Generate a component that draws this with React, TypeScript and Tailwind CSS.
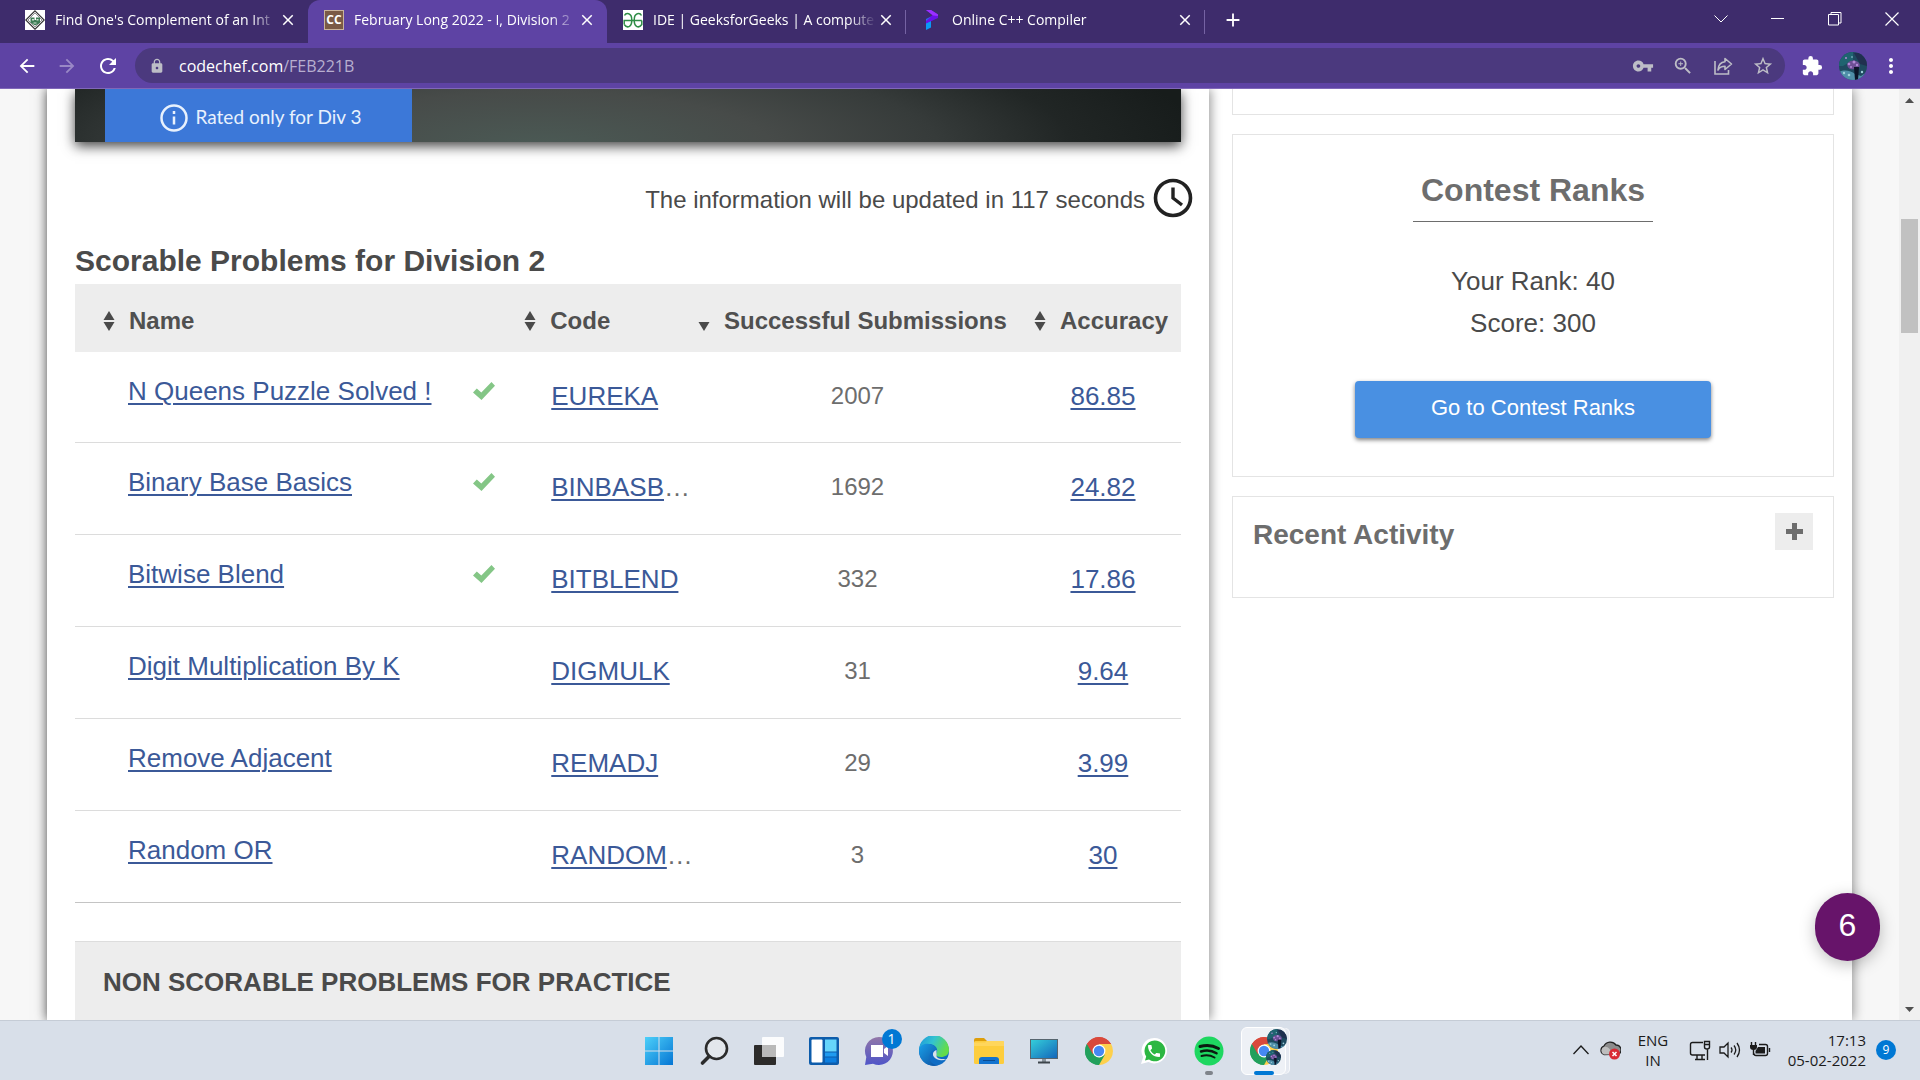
import React from "react";
import {
  MdArrowBack,
  MdArrowForward,
  MdRefresh,
  MdLock,
  MdVpnKey,
  MdZoomIn,
  MdStarBorder,
  MdExtension,
  MdMoreVert,
  MdClose,
  MdAdd,
  MdPhone,
} from "react-icons/md";

const arial = "font-['Liberation_Sans',Arial,sans-serif]";
const segoe = "font-['Open_Sans','Noto_Sans',sans-serif]";

/* ---------- Browser chrome ---------- */

const LeetFavicon = () => (
  <svg viewBox="0 0 20 20" className="size-5 shrink-0">
    <rect width="20" height="20" fill="#fff" />
    <path d="M10 .8 19.2 10 10 19.2.8 10Z" fill="#fff" stroke="#333" strokeWidth="1.2" />
    <path d="M10 3 17 10 10 17 3 10Z" fill="none" stroke="#777" strokeWidth=".8" />
    <path d="M5.500 7.500h4v2.500h1.500V7.500h4v5.500l-5 2.500-4.500-3Z" fill="#3e7d55" />
    <path d="M7 9h2v1.500H7zM11.500 9h2v1.500h-2zM8.500 12.500h3v1h-3z" fill="#cfe3d5" />
  </svg>
);

const ChefFavicon = () => (
  <span className="flex size-5 shrink-0 items-center justify-center border border-[#c9b39c] bg-[#7a5a46] font-['Open_Sans',sans-serif] text-[12px] leading-none font-bold text-white">
    CC
  </span>
);

const GeeksFavicon = () => (
  <svg viewBox="0 0 20 20" className="size-5 shrink-0">
    <rect width="20" height="20" fill="#fff" />
    <g fill="none" stroke="#2f8d46" strokeWidth="1.5">
      <path d="M1.500 5.500C3 2.500 8.800 2.500 8.800 10S4 18.500 1.200 14.500" />
      <path d="M18.500 5.500C17 2.500 11.200 2.500 11.200 10S16 18.500 18.800 14.500V10.500" />
      <path d="M1.200 14.500V10.500H18.800" />
    </g>
  </svg>
);

const ProgramizFavicon = () => (
  <svg viewBox="0 0 20 20" className="size-5 shrink-0">
    <path d="M4 13 9 10.500V17.500L4 20Z" fill="#0a9bf5" />
    <path d="M4 9 9 6.500V9L4 12Z" fill="#2a6cf0" />
    <path d="M4 0h5l7 4.500V8L4 13.500V11L10.500 5Z" fill="#6a11e8" />
    <path d="M4 0h5l7 4.500V6l-5-.5Z" fill="#9b30ff" />
  </svg>
);

type TabProps = { icon: React.ReactNode; title: string; active?: boolean; divider?: boolean };

const Tab = ({ icon, title, active, divider }: TabProps) => (
  <div
    className={
      "relative flex h-[43px] w-[299px] min-w-0 items-center pb-1 pl-4 pr-2.5 " +
      (active ? "rounded-t-xl bg-[#5e43a4]" : "")
    }
  >
    {icon}
    <span
      className={
        "ml-2.5 min-w-0 flex-1 overflow-hidden whitespace-nowrap text-sm leading-6 text-white [mask-image:linear-gradient(to_right,black_88%,transparent)] " +
        segoe
      }
    >
      {title}
    </span>
    <button aria-label="Close tab" className="flex size-5 items-center justify-center text-white">
      <MdClose className="size-[18px]" />
    </button>
    {divider && <span className="absolute right-0 top-2.5 h-6 w-px bg-[#7563a3]" />}
  </div>
);

const ShareIcon = () => (
  <svg viewBox="0 0 22 22" className="size-[22px]" fill="none" stroke="currentColor" strokeWidth="1.6">
    <path d="M3 6v13h13.500v-4" />
    <path d="M13 3.500 19.500 9 13 14.500V11.300C9.500 11.300 7.500 12.500 6 15 6.300 10.500 8.800 7.200 13 6.800Z" strokeLinejoin="round" />
  </svg>
);

const Avatar = ({ className }: { className: string }) => (
  <svg viewBox="0 0 28 28" className={className + " rounded-full"} aria-hidden="true">
    <rect width="28" height="28" fill="#1e4a5f" />
    <path d="M0 0h14v8L4 14H0z" fill="#1f6470" />
    <path d="M15 1h13v13l-7-2z" fill="#20304f" />
    <path d="M0 20c6-3 12-1 16 2l6 2 6-4v8H0z" fill="#4f8fa8" />
    <path d="M8 12c3-5 10-4 12-1s0 6-3 6-8 2-9-5z" fill="#6d4f95" />
    <path d="M15 15h5l-1 13h-3z" fill="#0b1428" />
    <g fill="#b08ad6">
      <circle cx="10" cy="12" r="1.300" />
      <circle cx="15" cy="10" r="1.500" />
      <circle cx="18" cy="13" r="1.200" />
      <circle cx="12" cy="15" r="1" />
      <circle cx="7" cy="6" r="1" />
    </g>
    <g fill="#9fd0dc">
      <circle cx="5" cy="21" r="1.200" />
      <circle cx="10" cy="23" r="1.300" />
      <circle cx="23" cy="20" r="1.200" />
      <circle cx="13" cy="5" r=".8" />
    </g>
  </svg>
);

const WindowButtons = () => (
  <div className="flex h-9 pt-px text-white">
    <button aria-label="Search tabs" className="flex w-[57px] items-center justify-center">
      <svg viewBox="0 0 14 8" className="h-2 w-3.5" fill="none" stroke="currentColor">
        <path d="M.5.500 7 7 13.500.5" />
      </svg>
    </button>
    <button aria-label="Minimize" className="flex w-[57px] items-center justify-center">
      <span className="h-px w-[13px] bg-white" />
    </button>
    <button aria-label="Restore" className="flex w-[57px] items-center justify-center">
      <svg viewBox="0 0 14 14" className="size-3.5" fill="none" stroke="currentColor">
        <path d="M.5 2.500h10v10.500H.5zM3 2.500V.500h10v10.500h-2.500" />
      </svg>
    </button>
    <button aria-label="Close" className="flex w-[57px] items-center justify-center">
      <svg viewBox="0 0 14 14" className="size-3.5" fill="none" stroke="currentColor" strokeWidth="1.200">
        <path d="M.5.500l13 13M13.500.500l-13 13" />
      </svg>
    </button>
  </div>
);

const BrowserBar = () => (
  <header className="shrink-0">
    <div className="flex h-[43px] justify-between bg-[#3e2c6c]">
      <div className="flex min-w-0 pl-[9px]">
        <Tab icon={<LeetFavicon />} title="Find One's Complement of an Int" />
        <Tab icon={<ChefFavicon />} title="February Long 2022 - I, Division 2" active />
        <Tab icon={<GeeksFavicon />} title="IDE | GeeksforGeeks | A compute" divider />
        <Tab icon={<ProgramizFavicon />} title="Online C++ Compiler" divider />
        <button aria-label="New tab" className="ml-3.5 flex w-7 items-center justify-center pb-1 text-white">
          <MdAdd className="size-[22px]" />
        </button>
      </div>
      <WindowButtons />
    </div>
    <div className="flex h-[46px] items-center border-b border-[#8068b8] bg-[#5e43a4] text-white">
      <div className="flex w-[135px] items-center gap-[18px] pl-4">
        <button aria-label="Back"><MdArrowBack className="size-[22px]" /></button>
        <button aria-label="Forward" className="text-[#9a88c6]"><MdArrowForward className="size-[22px]" /></button>
        <button aria-label="Reload"><MdRefresh className="size-6" /></button>
      </div>
      <div className="flex h-[35px] flex-1 items-center rounded-full bg-[#4b397e] pl-3.5 pr-[11px] text-[#bdbdc6]">
        <MdLock className="size-4" />
        <div className={"ml-3.5 flex-1 text-base leading-6 text-[#b7aecf] " + segoe}>
          <span className="text-white">codechef.com</span>/FEB221B
        </div>
        <div className="flex items-center gap-[18px]">
          <button aria-label="Passwords"><MdVpnKey className="size-[22px]" /></button>
          <button aria-label="Zoom"><MdZoomIn className="size-[22px]" /></button>
          <button aria-label="Share"><ShareIcon /></button>
          <button aria-label="Bookmark"><MdStarBorder className="size-[22px]" /></button>
        </div>
      </div>
      <div className="flex w-[135px] items-center gap-4 pl-4">
        <button aria-label="Extensions"><MdExtension className="size-[22px]" /></button>
        <button aria-label="Profile"><Avatar className="size-7" /></button>
        <button aria-label="Menu" className="-ml-1"><MdMoreVert className="size-6" /></button>
      </div>
    </div>
  </header>
);

/* ---------- Contest page ---------- */

const SortIcon = ({ down }: { down?: boolean }) => (
  <svg viewBox="0 0 12 22" className="h-[22px] w-3 shrink-0" fill="#4a4a4a">
    {!down && <path d="M6 1 11.500 10H.5z" />}
    <path d="M.5 12h11L6 21z" />
  </svg>
);

const Check = () => (
  <svg viewBox="0 0 22 18" className="h-[18px] w-[22px] shrink-0" fill="#84c686" aria-label="Solved">
    <path d="M0 10.500 3.800 6.500 8.300 10.500 18.500 0 22 3.800 8.500 18Z" />
  </svg>
);

const problems = [
  { name: "N Queens Puzzle Solved !", code: "EUREKA", subs: "2007", acc: "86.85", solved: true },
  { name: "Binary Base Basics", code: "BINBASB", cut: true, subs: "1692", acc: "24.82", solved: true },
  { name: "Bitwise Blend", code: "BITBLEND", subs: "332", acc: "17.86", solved: true },
  { name: "Digit Multiplication By K", code: "DIGMULK", subs: "31", acc: "9.64" },
  { name: "Remove Adjacent", code: "REMADJ", subs: "29", acc: "3.99" },
  { name: "Random OR", code: "RANDOM", cut: true, subs: "3", acc: "30" },
];

const headers = [
  { label: "Name", cls: "w-[38%] pl-7" },
  { label: "Code", cls: "pl-[29px]" },
  { label: "Successful Submissions", cls: "w-[335px] pl-2", down: true },
  { label: "Accuracy", cls: "w-[156px] pl-[9px]" },
];

const linkCls = "text-[#3b5998] underline decoration-2 underline-offset-[3px]";

const ProblemTable = () => (
  <table className="w-full table-fixed border-collapse">
    <thead>
      <tr className="h-[68px] bg-[#ededed]">
        {headers.map((h) => (
          <th key={h.label} className={"pt-1.5 text-left " + h.cls}>
            <button className="flex items-center gap-3.5 whitespace-nowrap text-2xl font-bold text-[#505050]">
              <SortIcon down={h.down} />
              {h.label}
            </button>
          </th>
        ))}
      </tr>
    </thead>
    <tbody>
      {problems.map((p) => (
        <tr key={p.code} className="h-[92px] border-b border-[#dcdcdc] text-[26px] leading-8 first:h-[90px] last:border-[#c4c4c4]">
          <td className="pb-3 pl-[53px]">
            <div className="flex items-center justify-between">
              <a href="#" className={linkCls}>{p.name}</a>
              {p.solved && <Check />}
            </div>
          </td>
          <td className="whitespace-nowrap pb-0.5 pl-14 text-[#6d6d6d]">
            <a href="#" className={linkCls}>{p.code}</a>
            {p.cut && "…"}
          </td>
          <td className="pb-0.5 text-center text-2xl text-[#6d6d6d]">{p.subs}</td>
          <td className="pb-0.5 text-center">
            <a href="#" className={linkCls}>{p.acc}</a>
          </td>
        </tr>
      ))}
    </tbody>
  </table>
);

const Main = () => (
  <main className="z-10 flex-1 bg-white pl-7 pr-7 shadow-[2px_0_10px_rgba(0,0,0,0.4)]">
    <div className="flex h-[53px] bg-[radial-gradient(60%_300%_at_42%_110%,#4b5a55_0%,#474b49_35%,#363b3a_60%,#212625_80%,#171c1b_100%)] pl-[30px] shadow-[0_4px_12px_rgba(0,0,0,0.75)]">
      <div className="flex w-[307px] items-center justify-center gap-2 bg-[#3c78d8] pt-1 pl-1 font-['Lato',sans-serif] text-[19px] text-[#e8f1fd]">
        <svg viewBox="0 0 28 28" className="size-7" fill="none" stroke="currentColor" strokeWidth="2.500">
          <circle cx="14" cy="14" r="12.500" />
          <path d="M14 12.500v8M14 7v3" />
        </svg>
        Rated only for Div 3
      </div>
    </div>
    <div className="-mr-3 mt-9 flex h-10 items-center justify-end gap-2 text-2xl text-[#4a4a4a]">
      <span className="pt-1">The information will be updated in 117 seconds</span>
      <svg viewBox="0 0 40 40" className="size-10" fill="none" stroke="#222">
        <circle cx="20" cy="20" r="17.500" strokeWidth="3.600" />
        <path d="M20 9.500V20l9 7" strokeWidth="3.400" />
      </svg>
    </div>
    <h2 className="mt-[22px] pb-[3px] text-[30px] leading-[41px] font-bold text-[#4a4a4a]">Scorable Problems for Division 2</h2>
    <ProblemTable />
    <section className="mt-[38px] border-t border-[#ddd] bg-[#ededed] px-7 pb-24 pt-[22px]">
      <h2 className="text-[26px] leading-9 font-bold text-[#4a4a4a]">NON SCORABLE PROBLEMS FOR PRACTICE</h2>
    </section>
  </main>
);

const Sidebar = () => (
  <aside className="w-[643px] shrink-0 pl-[23px] pr-[18px]">
    <div className="h-[26px] border border-t-0 border-[#e4e4e4]" />
    <section className="mt-[19px] flex flex-col items-center border border-[#e4e4e4] pb-[38px] pt-8 text-[#4a4a4a]">
      <h2 className="border-b border-[#6d6d6d] px-2 pb-2 text-[32px] leading-[46px] font-bold text-[#6d6d6d]">Contest Ranks</h2>
      <div className="mt-[38px] text-center text-[26px] leading-[42px]">
        <p>Your Rank: 40</p>
        <p>Score: 300</p>
      </div>
      <button className="mt-[37px] h-[57px] w-[356px] rounded bg-[#4990e2] pb-1 text-[22px] text-white shadow-[0_2px_4px_rgba(0,0,0,0.5)]">
        Go to Contest Ranks
      </button>
    </section>
    <section className="mt-[19px] flex h-[102px] items-start justify-between border border-[#e4e4e4] px-5 pt-4">
      <h2 className="pt-1 text-[28px] leading-9 font-bold text-[#6d6d6d]">Recent Activity</h2>
      <button aria-label="Expand" className="flex h-[37px] w-[38px] items-center justify-center bg-[#ededed]">
        <svg viewBox="0 0 17 17" className="size-[17px]" stroke="#6d6d6d" strokeWidth="5">
          <path d="M8.500 0v17M0 8.500h17" />
        </svg>
      </button>
    </section>
  </aside>
);

const Scrollbar = () => (
  <div className="flex w-[21px] shrink-0 flex-col items-center bg-[#f0f0f0]">
    <svg viewBox="0 0 9 5" className="mt-[9px] h-[5px] w-[9px]" fill="#505050"><path d="M0 5 4.500 0 9 5z" /></svg>
    <div className="mt-[116px] h-[114px] w-[17px] bg-[#c1c1c1]" />
    <svg viewBox="0 0 9 5" className="mb-2 mt-auto h-[5px] w-[9px]" fill="#505050"><path d="M0 0h9L4.500 5z" /></svg>
  </div>
);

/* ---------- Taskbar ---------- */

const ChromeLogo = ({ className }: { className: string }) => (
  <svg viewBox="0 0 28 28" className={className}>
    <path d="M14 14 1.900 7A14 14 0 0 1 26.100 7Z" fill="#d9493c" />
    <path d="M14 14 1.900 7A14 14 0 0 0 14 28l6-10.500Z" fill="#22a05c" />
    <path d="M14 14 14 28A14 14 0 0 0 26.100 7H14Z" fill="#fdd04c" />
    <path d="M8 17.500 1.900 7A14 14 0 0 0 14 28l6-10.500-6 3Z" fill="#22a05c" />
    <path d="M14 7h12.100A14 14 0 0 0 1.900 7L8 17.500V12Z" fill="#d9493c" />
    <circle cx="14" cy="14" r="6.400" fill="#fff" />
    <circle cx="14" cy="14" r="5.200" fill="#4688f4" />
  </svg>
);

const apps: { label: string; icon: React.ReactNode; mark?: "idle" }[] = [
  {
    label: "Start",
    icon: (
      <svg viewBox="0 0 30 30" className="size-[30px]">
        <defs>
          <linearGradient id="start" x1="0" y1="0" x2="30" y2="30" gradientUnits="userSpaceOnUse">
            <stop stopColor="#4fd3fb" />
            <stop offset="1" stopColor="#0372d2" />
          </linearGradient>
        </defs>
        <path d="M1 1h13.500v13.500H1zM15.500 1H29v13.500H15.500zM1 15.500h13.500V29H1zM15.500 15.500H29V29H15.500z" fill="url(#start)" />
      </svg>
    ),
  },
  {
    label: "Search",
    icon: (
      <svg viewBox="0 0 30 30" className="size-[30px]" fill="none" stroke="#2b2b2b">
        <circle cx="17.500" cy="12.500" r="10.500" strokeWidth="2.600" fill="#e3e7ec" />
        <path d="M10 20.500 3.500 27" strokeWidth="3.600" strokeLinecap="round" />
      </svg>
    ),
  },
  {
    label: "Task view",
    icon: (
      <svg viewBox="0 0 30 30" className="size-[30px]">
        <rect y="9" width="22" height="20" rx="1" fill="#2c2b2a" />
        <rect x="8" y="1" width="22" height="20" rx="1" fill="#fff" fillOpacity=".9" />
        <path d="M8 9h14v12H8z" fill="#b9b9b9" />
      </svg>
    ),
  },
  {
    label: "Widgets",
    icon: (
      <svg viewBox="0 0 30 30" className="size-[30px]">
        <rect y="1" width="30" height="28" rx="2" fill="#0d5cab" />
        <rect x="2.500" y="3.500" width="11" height="23" rx="1" fill="#fff" />
        <path d="M16 3.500h11.500v12H16z" fill="#66d5fb" />
        <path d="M16 16.500h11.500v4H16z" fill="#1f9bf0" />
        <path d="M16 21.500h11.500v5H16z" fill="#0c7fe0" />
      </svg>
    ),
  },
  {
    label: "Chat",
    icon: (
      <span className="relative">
        <svg viewBox="0 0 30 30" className="size-[30px]">
          <defs>
            <linearGradient id="chat" x1="0" y1="0" x2="0" y2="1">
              <stop stopColor="#9277a8" />
              <stop offset="1" stopColor="#4f55c8" />
            </linearGradient>
          </defs>
          <path d="M15 1a14 14 0 1 1-6 26.700L1 29l1.300-8A14 14 0 0 1 15 1Z" fill="url(#chat)" />
          <path d="M7 9h12v12H7zM20 13l4-3v10l-4-3z" fill="#fff" />
        </svg>
        <span className={"absolute -right-2 -top-[7px] flex size-5 items-center justify-center rounded-full bg-[#0078d4] text-sm leading-none text-white " + segoe}>
          1
        </span>
      </span>
    ),
  },
  {
    label: "Edge",
    icon: (
      <svg viewBox="0 0 30 30" className="size-[30px]">
        <defs>
          <linearGradient id="edge-top" x1="0" y1="0" x2="1" y2=".4">
            <stop stopColor="#1d94dd" />
            <stop offset=".5" stopColor="#33c3d0" />
            <stop offset="1" stopColor="#63dd4a" />
          </linearGradient>
          <linearGradient id="edge-body" x1="0" y1="0" x2="1" y2="1">
            <stop stopColor="#1aa0e8" />
            <stop offset="1" stopColor="#0c4fa0" />
          </linearGradient>
        </defs>
        <circle cx="15" cy="15" r="15" fill="#0f6cc4" />
        <path d="M0 14A15 15 0 0 1 30 14c0 5-4 7-8 7-5 0-6-2-4.500-4C20 12 15 8 10 8S1 11 0 14Z" fill="url(#edge-top)" />
        <path d="M0 15c0-6 6-8 10-7 4 .5 7 3 7.500 6-3-1-7 2-7 7s4 8.500 9 8A15 15 0 0 1 0 15Z" fill="url(#edge-body)" />
        <path d="M17.500 14c-3.500 1-4.500 4.500-2.500 7s7 4.500 13 2l2-1v8h-4l3-5.500-4-1.500c-4 .5-8-1-7.500-4Z" fill="#d9e0ea" />
      </svg>
    ),
  },
  {
    label: "File Explorer",
    icon: (
      <svg viewBox="0 0 30 30" className="size-[30px]">
        <path d="M0 4q0-2 2-2h8l3 3v4H0z" fill="#dd9e0c" />
        <rect y="5" width="30" height="23" rx="1.500" fill="#fdcd3d" />
        <path d="M0 6.500 11 6.500 13 5h16q1 0 1 1v4H0z" fill="#ffd65c" />
        <path d="M5 28v-4q0-3 3-3h14q3 0 3 3v4z" fill="#1273cf" />
        <path d="M9 24.500h12" stroke="#0a4b90" />
      </svg>
    ),
  },
  {
    label: "Remote Desktop",
    icon: (
      <svg viewBox="0 0 30 30" className="size-[30px]">
        <defs>
          <linearGradient id="screen" x1="0" y1="0" x2="1" y2="1">
            <stop stopColor="#35d0da" />
            <stop offset="1" stopColor="#1264ba" />
          </linearGradient>
        </defs>
        <rect x="1.500" y="3.500" width="27" height="19" fill="url(#screen)" stroke="#56656f" />
        <path d="M13 23h4v3h-4z" fill="#8a949c" />
        <path d="M9 25.500h12v2H9z" fill="#3d444a" />
      </svg>
    ),
  },
  { label: "Chrome", icon: <ChromeLogo className="size-7" /> },
  {
    label: "WhatsApp",
    icon: (
      <span className="relative flex size-7 items-center justify-center">
        <svg viewBox="0 0 28 28" className="size-7">
          <path d="M14.500 1a12.700 12.700 0 1 1-6 24L1 27l2.200-7A12.700 12.700 0 0 1 14.500 1Z" fill="#fff" />
          <path d="M14.500 3.500a10.400 10.400 0 1 1-5.500 19l-4 1 1.200-4A10.400 10.400 0 0 1 14.500 3.500Z" fill="#2cb742" />
        </svg>
        <MdPhone className="absolute size-4 text-white" />
      </span>
    ),
  },
  {
    label: "Spotify",
    mark: "idle",
    icon: (
      <svg viewBox="0 0 30 30" className="size-[30px]" fill="none" stroke="#0b1a10" strokeLinecap="round">
        <circle cx="15" cy="15" r="14.500" fill="#1ed760" stroke="none" />
        <path d="M6 10.500c6-1.800 13-1.200 18.500 2" strokeWidth="3" />
        <path d="M7 15.500c5-1.500 11-1 15.500 1.800" strokeWidth="2.500" />
        <path d="M7.500 20c4.500-1.200 9-.8 13 1.500" strokeWidth="2" />
      </svg>
    ),
  },
];

const Taskbar = () => (
  <footer className="grid h-[60px] shrink-0 grid-cols-[1fr_auto_1fr] border-t border-[#c5ccd6] bg-[#d8dfe9]">
    <div />
    <nav className="flex pl-0.5">
      {apps.map((a) => (
        <button key={a.label} aria-label={a.label} className="relative flex w-[55px] items-center justify-center">
          {a.icon}
          {a.mark && <span className="absolute bottom-[5px] h-1 w-2 rounded-full bg-[#7f848b]" />}
        </button>
      ))}
      <button aria-label="Chrome window" className="relative flex w-[55px] items-center justify-center">
        <span className="flex h-12 w-[45px] items-center justify-center rounded-md border border-white bg-[#eef1f6] shadow-[4px_0_0_-1px_#e6eaf1,5px_0_0_-1px_#f8f9fb]">
          <ChromeLogo className="size-7" />
        </span>
        <Avatar className="absolute right-1 top-2 size-5" />
        <Avatar className="absolute right-2.5 top-[29px] size-[15px]" />
        <span className="absolute bottom-[5px] h-1 w-5 rounded-full bg-[#0078d4]" />
      </button>
    </nav>
    <div className={"flex items-center justify-end pb-0.5 pr-6 text-[15px] leading-5 text-[#1b1b1b] " + segoe}>
      <button aria-label="Hidden icons">
        <svg viewBox="0 0 16 10" className="h-2.5 w-4" fill="none" stroke="currentColor" strokeWidth="1.300"><path d="M.5 9 8 1l7.500 8" /></svg>
      </button>
      <svg viewBox="0 0 22 20" className="ml-2.5 h-5 w-[22px]">
        <path d="M5 14.500a4.500 4.500 0 0 1 0-8.500 7 7 0 0 1 12-1 5 5 0 0 1 3 9z" fill="#8c8c8c" stroke="#222" strokeWidth="1.300" />
        <path d="M5 14.500a4 4 0 0 1 0-7.500c4-1 6 2 9 7.500z" fill="#bdbdbd" />
        <circle cx="15.500" cy="14" r="5.500" fill="#d92b35" />
        <path d="m13.500 12 4 4m0-4-4 4" stroke="#fff" strokeWidth="1.500" />
      </svg>
      <div className="ml-4 w-8 text-center"><p>ENG</p><p>IN</p></div>
      <svg viewBox="0 0 22 22" className="ml-5 size-[22px]" fill="none" stroke="currentColor" strokeWidth="1.400">
        <path d="M14 3.500H3.500q-2 0-2 2V14q0 2 2 2H16M6 20.500h10M8 16v4.500M13 16v4.500M18.500 10v11M15.500 2.500h5V8q0 2-2.500 2t-2.500-2zM15.500 5.500h5" />
      </svg>
      <svg viewBox="0 0 22 20" className="ml-2 h-5 w-[22px]" fill="none" stroke="currentColor" strokeWidth="1.300">
        <path d="M1 7h4l4-4v14l-4-4H1zM12 7.500q2 2.500 0 5M15 5.500q3.500 4.500 0 9M18 3q5 7 0 14" />
      </svg>
      <svg viewBox="0 0 22 20" className="ml-2 h-5 w-[22px]" fill="none" stroke="currentColor" strokeWidth="1.400">
        <path d="M10 4.500h6.500q2 0 2 2v7q0 2-2 2H7q-2 0-2-2M20.500 8v4" />
        <path d="M9 7h7v6.500H6.500V11z" fill="currentColor" stroke="none" />
        <path d="M2.500 2v3M6.500 2v3M4.500 9v6" />
        <path d="M1 5h7v2q0 3-3.500 3T1 7z" fill="currentColor" stroke="none" />
      </svg>
      <div className="ml-[15px] w-20 whitespace-nowrap text-right"><p>17:13</p><p>05-02-2022</p></div>
      <span className="ml-2.5 flex size-5 shrink-0 items-center justify-center rounded-full bg-[#0078d4] text-xs text-white">9</span>
    </div>
  </footer>
);

export default function App() {
  return (
    <div className="flex h-screen flex-col overflow-hidden">
      <BrowserBar />
      <div className={"relative flex min-h-0 flex-1 overflow-hidden bg-[#f7f7f7] " + arial}>
        <div className="flex min-w-0 flex-1 pl-[47px] pr-[47px]">
          <div className="flex min-w-0 flex-1 bg-white shadow-[0_0_12px_rgba(0,0,0,0.5)]">
            <Main />
            <Sidebar />
          </div>
        </div>
        <Scrollbar />
        <button className="absolute bottom-[59px] right-10 z-20 flex h-[68px] w-[65px] items-center justify-center rounded-full bg-[#67146a] pb-1 text-[32px] text-white shadow-[0_4px_16px_rgba(0,0,0,0.25)]">
          6
        </button>
      </div>
      <Taskbar />
    </div>
  );
}
